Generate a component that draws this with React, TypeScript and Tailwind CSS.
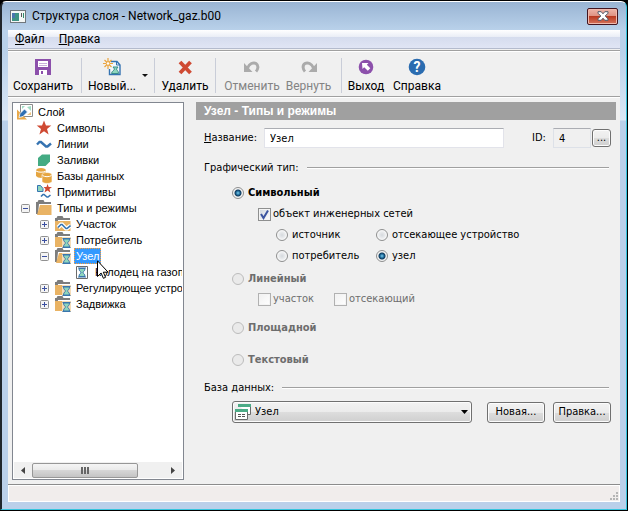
import React from 'react'

const FolderBase = ({ open }: any) => (
    <>
        <path d="M0 2h1.500l1-2h5l1 2H15v2H3L2 14H0z" fill="#7d7d7d" />
        {open ? <path d="M4 5h11.500v10H1z" fill="#e9b364" /> : <path d="M0 5h15.500v10H0z" fill="#e9b364" />}
    </>
)

const Hourglass = ({ x = 0, y = 0 }: any) => (
    <g transform={`translate(${x} ${y})`}>
        <path d="M.5.500h8M.5 9.500h8" stroke="#3a76ad" />
        <path d="M1.500 1c0 3 2 3 2 4s-2 1-2 4h6c0-3-2-3-2-4s2-1 2-4z" fill="#8fd6bd" stroke="#3a76ad" />
    </g>
)

const Icon = ({ name }: any) => (
    <svg className="w-4 h-4 shrink-0" viewBox="0 0 16 16" fill="none" aria-hidden="true">
        {name === 'layer' && (
            <>
                <path d="M3.500.500h12v12h-12z" fill="#fff" stroke="#8b8b8b" />
                <path d="M10 3l4-1v5z" fill="#9fdcc4" />
                <path d="M10 11l4-3v3z" fill="#efc583" />
                <path d="M5 2h3L5 5z" fill="#9fdcc4" />
                <path d="M0 5.500v10h10z" fill="#e9a94a" />
                <path d="M2 13.500l1-4 4.500-4.500 3 3L6 12.500z" fill="#2f6fb3" stroke="#fff" strokeWidth=".8" />
            </>
        )}
        {name === 'star' && <path d="M8 .5l2 5h5.300l-4.300 3.400 1.600 5.600L8 11.200l-4.600 3.300L5 8.900.7 5.500H6z" fill="#cf4a33" />}
        {name === 'line' && <path d="M1 8.500l2.500-2.500h1.500l5 4.500h1.500L15 7.500" stroke="#3573b1" strokeWidth="2.400" />}
        {name === 'fill' && <path d="M2 14V6l4-3.500h8v7L9.500 14z" fill="#43ab83" />}
        {name === 'db' && (
            <>
                <path d="M0 2.500C0 1 2 0 5 0s5 1 5 2.500V10H5.500L2 9.500 0 8z" fill="#e5a541" />
                <path d="M0 3c2 1.600 8 1.600 10 0" stroke="#fff" />
                <path d="M6 7c0-1.500 2-2.500 5-2.500S16 5.500 16 7v6.500c-1 2.600-9 2.600-10 0z" fill="#e5a541" stroke="#fff" strokeWidth=".6" />
                <path d="M6.500 7.500c2 1.600 7 1.600 9 0" stroke="#fff" />
            </>
        )}
        {name === 'prim' && (
            <>
                <path d="M1.500 1.500h3l2.500 3v3H1.500z" fill="#8fd6bd" stroke="#3573b1" />
                <path d="M11.500 0l1.200 3H16l-2.600 2 1 3.500-2.900-2-3 2 1-3.500L7.500 3h3z" fill="#cf4a33" />
                <path d="M5 12.500l2-2h1l3 2.500h1l2.500-2" stroke="#3573b1" strokeWidth="1.600" />
            </>
        )}
        {name === 'folder' && <FolderBase open />}
        {name === 'section' && (
            <>
                <FolderBase />
                <path d="M3 11.500l3-3h1l4 4h1l3.500-3" stroke="#fff" strokeWidth="4" />
                <path d="M3 11.500l3-3h1l4 4h1l3.500-3" stroke="#3573b1" strokeWidth="1.600" />
            </>
        )}
        {(name === 'node' || name === 'nodeOpen') && (
            <>
                <FolderBase open={name === 'nodeOpen'} />
                <path d="M7 5h9v11H7z" fill="#f5dcb8" />
                <Hourglass x={7} y={6} />
            </>
        )}
        {name === 'item' && (
            <>
                <path d="M2.500 2.500h11v12h-11z" fill="#fff" stroke="#6b6b6b" />
                <Hourglass x={3.500} y={3.500} />
            </>
        )}
    </svg>
)

const tree = [
    { text: 'Слой', icon: 'layer', level: 0 },
    { text: 'Символы', icon: 'star', level: 1 },
    { text: 'Линии', icon: 'line', level: 1 },
    { text: 'Заливки', icon: 'fill', level: 1 },
    { text: 'Базы данных', icon: 'db', level: 1 },
    { text: 'Примитивы', icon: 'prim', level: 1 },
    { text: 'Типы и режимы', icon: 'folder', level: 1, box: '-' },
    { text: 'Участок', icon: 'section', level: 2, box: '+' },
    { text: 'Потребитель', icon: 'node', level: 2, box: '+' },
    { text: 'Узел', icon: 'nodeOpen', level: 2, box: '-', selected: true },
    { text: 'Колодец на газопроводе', icon: 'item', level: 3 },
    { text: 'Регулирующее устройство', icon: 'node', level: 2, box: '+' },
    { text: 'Задвижка', icon: 'node', level: 2, box: '+' },
]

const indent = ['pl-1', 'pl-2', 'pl-[27px]', 'pl-[46px]']

const TreeRow = ({ row }: any) => (
    <li className={`flex items-center h-4 whitespace-nowrap ${indent[row.level]}`}>
        {row.level > 0 && (
            <span className="w-[9px] mr-[6px] shrink-0">
                {row.box && (
                    <button aria-label={row.text} className="block w-[9px] h-[9px]">
                        <svg className="w-[9px] h-[9px]" viewBox="0 0 9 9" fill="none">
                            <rect x=".5" y=".5" width="8" height="8" rx="1" fill="#f4f4f4" stroke="#919191" />
                            <path d={row.box === '+' ? 'M2 4.500h5M4.500 2v5' : 'M2 4.500h5'} stroke="#3b4fa0" />
                        </svg>
                    </button>
                )}
            </span>
        )}
        <Icon name={row.icon} />
        {row.selected ? (
            <span className="relative ml-[3px] h-4 px-px border border-dotted border-[#ff9d33] bg-[#3399ff] text-white leading-[14px]">
                {row.text}
                <svg className="absolute left-[22px] top-[11px] w-3 h-[19px] z-10" viewBox="0 0 12 19" aria-hidden="true">
                    <path d="M.5.800v15.700l3.600-3.500 2.300 5.300 2.200-1-2.300-5.100h4.800z" fill="#fff" stroke="#000" />
                </svg>
            </span>
        ) : (
            <span className="ml-[3px] px-[2px]">{row.text}</span>
        )}
    </li>
)

const ToolButton = ({ label, width, disabled, children }: any) => (
    <button disabled={disabled} className={`flex flex-col items-center gap-[2px] whitespace-nowrap ${width} ${disabled ? 'text-[#838383]' : 'text-black'}`}>
        <svg className="w-[18px] h-[18px]" viewBox="0 0 18 18" fill="none" aria-hidden="true">{children}</svg>
        <span className="leading-4">{label}</span>
    </button>
)

const Separator = () => <div className="w-px h-[35px] bg-[#c9cdd8] mx-[6px]" />

const Radio = ({ label, name, checked, disabled, bold, className = '' }: any) => (
    <label className={`flex items-center gap-1 h-4 whitespace-nowrap ${bold ? 'font-bold' : ''} ${disabled ? 'text-[#6d6d6d]' : ''} ${className}`}>
        <input
            type="radio"
            name={name}
            defaultChecked={checked}
            disabled={disabled}
            className="appearance-none w-3 h-3 shrink-0 rounded-full border border-[#8e8f8f] bg-[radial-gradient(circle,#d5d9dd_0,#e9ebed_3px,#fafafa_5px)] checked:bg-[radial-gradient(circle_at_5px_5px,#7fd0f0_0,#1c6796_2px,#123b5c_3px,#f4f4f4_4px)] disabled:border-[#bcbcbc] disabled:bg-none disabled:bg-[#eaeaea]"
        />
        <span>{label}</span>
    </label>
)

const Check = ({ label, checked, disabled, className = '' }: any) => (
    <label className={`relative flex items-center gap-[2px] h-4 whitespace-nowrap ${disabled ? 'text-[#6d6d6d]' : ''} ${className}`}>
        <input
            type="checkbox"
            defaultChecked={checked}
            disabled={disabled}
            className="peer appearance-none w-[13px] h-[13px] shrink-0 border border-[#8e8f8f] bg-linear-to-br from-[#cfd6de] to-white shadow-[inset_0_0_0_1px_#f4f4f4] disabled:border-[#b1b1b1] disabled:from-[#f0f0f0]"
        />
        <svg className="absolute left-0 w-[13px] h-[13px] hidden peer-checked:block" viewBox="0 0 13 13" fill="none" aria-hidden="true">
            <path d="M3 6l2.500 4L10 2.500" stroke="#3c55a0" strokeWidth="2" />
        </svg>
        <span>{label}</span>
    </label>
)

const Group = ({ title, children }: any) => (
    <fieldset>
        <div className="flex items-center gap-2 h-4 pl-2 pr-[7px]">
            <span>{title}</span>
            <div className="flex-1 h-[2px] border-t border-[#a0a0a0] bg-white" />
        </div>
        {children}
    </fieldset>
)

const pushButton = 'rounded-[3px] border border-[#707070] bg-[linear-gradient(#f2f2f2_0,#ebebeb_50%,#dddddd_50%,#cfcfcf_100%)] shadow-[inset_0_0_0_1px_#fcfcfc]'

const App = () => {
    return (
        <div className="h-screen bg-black p-px pl-0 font-['Roboto','Noto_Sans',sans-serif] text-xs text-black cursor-default select-none overflow-hidden">
            <div className="h-full flex flex-col rounded-t-md border-l-2 border-l-[#20262c] border-r border-r-[#35c4dd] border-t border-t-white border-b border-b-[#35c4dd] px-[6px] pb-[7px] bg-[linear-gradient(#99b4d3_0,#b9d1ea_28px,#b9d1ea_50px,#dbe8f6_118px,#bad0ea_119px)]">
                <header className="flex items-center h-7 px-[2px] gap-[6px] shrink-0">
                    <svg className="w-4 h-[13px]" viewBox="0 0 16 13" aria-hidden="true">
                        <rect x=".5" y=".5" width="15" height="12" fill="#f4f7f5" stroke="#70777c" />
                        <rect x="2" y="3" width="7" height="8" fill="#3f9384" />
                        <rect x="2" y="3" width="3" height="5" fill="#4a76ae" />
                        <rect x="11" y="3" width="1" height="4" fill="#555" />
                        <rect x="13" y="3" width="1" height="5" fill="#2f8c6b" />
                    </svg>
                    <h1 className="flex-1">Структура слоя - Network_gaz.b00</h1>
                    <button aria-label="Закрыть" className="flex items-center justify-center w-[31px] h-[17px] rounded-[2px] border border-[#431520] bg-[linear-gradient(#eeb4a8_0,#dd8f80_50%,#b93a22_50%,#d5745c_100%)] shadow-[inset_0_0_0_1px_#f0b9ad]">
                        <svg className="w-3 h-[10px]" viewBox="0 0 12 10" aria-hidden="true">
                            <path d="M1 .7h3.200L6 2.800 7.800.7H11v1.500L8.200 5 11 7.800v1.500H7.800L6 7.200 4.200 9.300H1V7.800L3.800 5 1 2.200z" fill="#fff" stroke="#515a6b" strokeWidth="1" />
                        </svg>
                    </button>
                </header>

                <div className="flex-1 min-h-0 flex flex-col bg-[#f0f0f0]">
                    <nav className="flex items-center h-[19px] pl-[7px] gap-[14px] border-b border-[#b4bbcd] bg-[linear-gradient(#ffffff_0,#e9edf6_7px,#d5dcee_7px,#e0e5f4_18px)]">
                        <button><u>Ф</u>айл</button>
                        <button><u>П</u>равка</button>
                    </nav>

                    <div className="mt-px h-[47px] shrink-0 border-y border-[#a0a0a0] shadow-[inset_0_1px_0_#fff,0_1px_0_#fff] flex items-center pl-[3px] pt-1">
                        <ToolButton label="Сохранить" width="w-16">
                            <path d="M1 1h16v16H1z" fill="#8c50ab" />
                            <path d="M4 3h10v6H4z" fill="#fff" />
                            <path d="M5 5.500h8M5 7.500h8" stroke="#c9aedb" />
                            <path d="M5 12h8v5H5z" fill="#fff" />
                            <path d="M7 13h2v3H7z" fill="#8c50ab" />
                        </ToolButton>
                        <Separator />
                        <ToolButton label="Новый..." width="w-12">
                            <path d="M8 3.500h6l3 3.500v9.500H6.500V11" fill="#f4f8fb" stroke="#3573b1" strokeWidth="1.400" />
                            <path d="M13.500 3v4H17" stroke="#3573b1" />
                            <path d="M8.500 15.500c.5-3 3-3 3-4.500l-1.500-2h5l-1.500 2c0 1.500 2 1.500 2 4.500z" fill="#8fd6bd" stroke="#3a8d8b" />
                            <path d="M5 0v11M0 5.500h10M1.500 2l7 7M8.500 2l-7 7" stroke="#eba53f" strokeWidth="1.200" />
                            <circle cx="5" cy="5.500" r="1.800" fill="#fff" stroke="#eba53f" />
                        </ToolButton>
                        <button aria-label="Список" className="w-3 flex justify-end">
                            <svg className="w-[6px] h-[3px]" viewBox="0 0 6 3"><path d="M0 0h6L3 3z" fill="#111" /></svg>
                        </button>
                        <Separator />
                        <ToolButton label="Удалить" width="w-12">
                            <path d="M4 4l10.500 11M14.500 4L4 15" stroke="#cf4a33" strokeWidth="3.800" />
                        </ToolButton>
                        <Separator />
                        <ToolButton label="Отменить" width="w-[60px]" disabled>
                            <path d="M1 5v9h8.500z" fill="#ababab" />
                            <path d="M4.500 10C6 5.500 10.500 4 13 5.500c3 2 2 6 0 8" stroke="#ababab" strokeWidth="3" />
                        </ToolButton>
                        <ToolButton label="Вернуть" width="w-[53px]" disabled>
                            <path d="M17 5v9H8.500z" fill="#ababab" />
                            <path d="M13.500 10C12 5.500 7.500 4 5 5.500c-3 2-2 6 0 8" stroke="#ababab" strokeWidth="3" />
                        </ToolButton>
                        <Separator />
                        <ToolButton label="Выход" width="w-9">
                            <circle cx="9" cy="9" r="7.300" fill="#8c50ab" />
                            <path d="M5 5h6.500L9.800 6.700l3.500 3.600-2.500 2.500-3.600-3.500L5.500 11z" fill="#fff" />
                        </ToolButton>
                        <ToolButton label="Справка" width="w-[66px]">
                            <circle cx="9" cy="9" r="8.300" fill="#2b6cb0" />
                            <text x="9" y="14" textAnchor="middle" className="text-sm font-bold" fill="#fff">?</text>
                        </ToolButton>
                    </div>

                    <main className="flex-1 min-h-0 flex pl-1 pr-1 pt-[5px] pb-1 gap-3">
                        <aside className="w-[172px] shrink-0 flex flex-col border border-[#828790] bg-white p-px pl-0 font-['Liberation_Sans',sans-serif] text-[11px]">
                            <ul className="flex-1 overflow-hidden">
                                {tree.map((row) => <TreeRow key={row.text} row={row} />)}
                            </ul>
                            <div className="flex items-center h-4 bg-[#f0f0f0] ml-px">
                                <button aria-label="Влево" className="w-[18px] flex justify-center">
                                    <svg className="w-1 h-[7px]" viewBox="0 0 4 7"><path d="M4 0v7L0 3.500z" fill="#444" /></svg>
                                </button>
                                <div className="flex items-center justify-center gap-px w-[106px] h-[15px] rounded-[2px] border border-[#979797] bg-[linear-gradient(#f5f5f5_0,#e9e9e9_50%,#d6d6d6_50%,#c4c4c4_100%)]">
                                    <i className="w-[2px] h-[7px] bg-[#666]" />
                                    <i className="w-[2px] h-[7px] bg-[#666]" />
                                    <i className="w-[2px] h-[7px] bg-[#666]" />
                                </div>
                                <button aria-label="Вправо" className="w-[18px] ml-auto flex justify-center">
                                    <svg className="w-1 h-[7px]" viewBox="0 0 4 7"><path d="M0 0v7l4-3.500z" fill="#444" /></svg>
                                </button>
                            </div>
                        </aside>

                        <section className="flex-1 min-w-0 font-['DejaVu_Sans_Condensed','DejaVu_Sans',sans-serif] text-[11px]">
                            <h2 className="h-[18px] leading-[18px] px-2 bg-[#a0a0a0] text-white font-bold text-xs font-['Liberation_Sans',sans-serif]">Узел - Типы и режимы</h2>

                            <div className="flex items-center mt-2 pl-2 pr-[5px]">
                                <label htmlFor="title" className="w-[60px]"><u>Н</u>азвание:</label>
                                <input id="title" defaultValue="Узел" className="flex-1 min-w-0 h-5 px-[5px] bg-white border border-[#e2e3ea] border-t-[#abadb3]" />
                                <label htmlFor="ident" className="ml-7 w-[21px]">ID:</label>
                                <input id="ident" defaultValue="4" readOnly className="w-[38px] h-5 px-[5px] border border-[#dde1e8] border-t-[#abadb3]" />
                                <button className={`ml-px w-[19px] h-[18px] leading-4 ${pushButton}`}>...</button>
                            </div>

                            <div className="mt-3">
                                <Group title="Графический тип:">
                                    <div className="pl-9 pt-[9px]">
                                        <Radio name="kind" label="Символьный" checked bold />
                                        <Check label="объект инженерных сетей" checked className="ml-[26px] mt-[5px]" />
                                        <div className="grid grid-cols-[100px_1fr] gap-y-[5px] pl-11 mt-[5px]">
                                            <Radio name="role" label="источник" />
                                            <Radio name="role" label="отсекающее устройство" />
                                            <Radio name="role" label="потребитель" />
                                            <Radio name="role" label="узел" checked />
                                        </div>
                                        <Radio name="kind" label="Линейный" disabled bold className="mt-[7px]" />
                                        <div className="grid grid-cols-[76px_1fr] pl-[26px] mt-1">
                                            <Check label="участок" disabled />
                                            <Check label="отсекающий" disabled />
                                        </div>
                                        <Radio name="kind" label="Площадной" disabled bold className="mt-[13px]" />
                                        <Radio name="kind" label="Текстовый" disabled bold className="mt-4" />
                                    </div>
                                </Group>
                            </div>

                            <div className="mt-3">
                                <Group title="База данных:">
                                    <div className="flex items-center pl-9 pr-[5px] mt-[5px]">
                                        <div className="relative flex-1">
                                            <select aria-label="База данных" className={`appearance-none block w-full h-[22px] pl-[22px] ${pushButton}`}>
                                                <option>Узел</option>
                                            </select>
                                            <svg className="absolute left-[3px] top-[3px] w-4 h-4 pointer-events-none" viewBox="0 0 16 16" fill="none" aria-hidden="true">
                                                <path d="M3.500.500h12v10h-3" fill="#fff" stroke="#6b6b6b" />
                                                <path d="M3 0h13v3H3z" fill="#4cab86" />
                                                <path d="M.5 5.500h12v10H.5z" fill="#fff" stroke="#6b6b6b" />
                                                <path d="M0 5h13v3H0z" fill="#4cab86" />
                                                <path d="M3 10.500h3M7 10.500h3M3 12.500h3M7 12.500h3" stroke="#555" />
                                            </svg>
                                            <svg className="absolute right-1 top-[9px] w-[7px] h-1 pointer-events-none" viewBox="0 0 7 4" aria-hidden="true">
                                                <path d="M0 0h7L3.500 4z" fill="#000" />
                                            </svg>
                                        </div>
                                        <button className={`ml-[15px] w-[58px] h-[21px] ${pushButton}`}>Новая...</button>
                                        <button className={`ml-2 w-[58px] h-[21px] ${pushButton}`}>Правка...</button>
                                    </div>
                                </Group>
                            </div>
                        </section>
                    </main>

                    <footer className="flex items-end justify-end h-[18px] shrink-0 border-t border-[#8c8c8c] bg-[#f1edec] shadow-[inset_0_0_0_1px_#fff] pr-[2px] pb-[2px]">
                        <svg className="w-2 h-2" viewBox="0 0 8 8" fill="#b5b5b5" aria-hidden="true">
                            <path d="M6 0h2v2H6zM3 3h2v2H3zM6 3h2v2H6zM0 6h2v2H0zM3 6h2v2H3zM6 6h2v2H6z" />
                        </svg>
                    </footer>
                </div>
            </div>
        </div>
    )
}

export default App
